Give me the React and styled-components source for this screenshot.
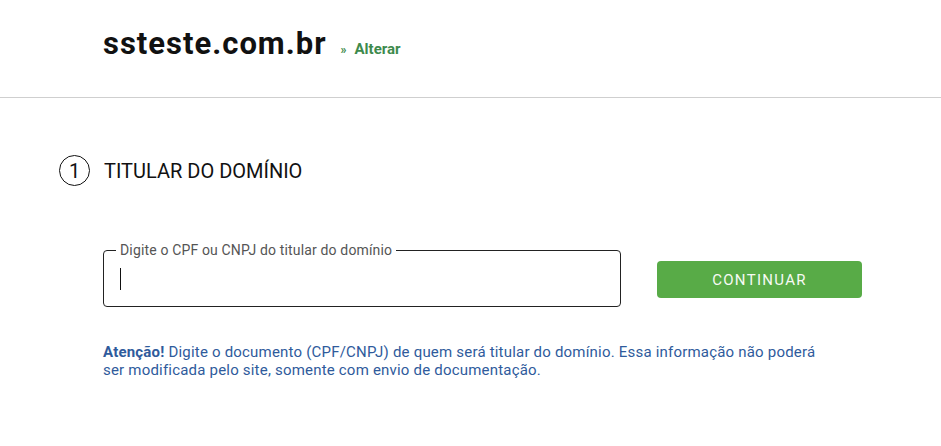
import React from 'react';
import styled, { createGlobalStyle } from 'styled-components';

const GlobalStyle = createGlobalStyle`
  html, body {
    margin: 0;
    padding: 0;
    background: #fff;
    font-family: Roboto, "Liberation Sans", Arial, sans-serif;
  }
`

const HeaderSC = styled.header`
  height: 98px;
  border-bottom: 1px solid #cfcfcf;
  box-sizing: border-box;
  display: flex;
  align-items: flex-start;
  padding: 25px 0 0 103px;
`

const DomainSC = styled.h1`
  margin: 0;
  font-size: 31px;
  font-weight: 700;
  letter-spacing: 1px;
  color: #111;
  line-height: 38px;
`

const ChangeLinkSC = styled.a`
  margin: 15px 0 0 14px;
  font-size: 15px;
  font-weight: 700;
  color: #3e8a4c;
  text-decoration: none;
  line-height: 18px;
  span {
    font-size: 12px;
    margin-right: 8px;
  }
`

const MainSC = styled.main`
  padding: 57px 0 0 59px;
`

const StepSC = styled.div`
  display: flex;
  align-items: center;
  gap: 14px;
`

const StepNumberSC = styled.span`
  width: 29px;
  height: 29px;
  border: 1.5px solid #111;
  border-radius: 50%;
  display: flex;
  align-items: center;
  justify-content: center;
  font-size: 20px;
  color: #111;
`

const StepTitleSC = styled.h2`
  margin: 0;
  font-size: 20px;
  font-weight: 400;
  color: #111;
`

const FormRowSC = styled.div`
  display: flex;
  align-items: flex-end;
  gap: 36px;
  margin: 56px 0 0 44px;
`

const FieldsetSC = styled.fieldset`
  width: 518px;
  height: 65px;
  box-sizing: border-box;
  margin: 0;
  padding: 0 16px;
  border: 1px solid #222;
  border-radius: 4px;
  display: flex;
  align-items: center;
`

const LegendSC = styled.legend`
  padding: 0 4px;
  margin-left: -4px;
  font-size: 14px;
  letter-spacing: 0.15px;
  color: #555;
`

const CaretSC = styled.span`
  width: 1px;
  height: 22px;
  background: #111;
  margin-top: -6px;
`

const ButtonSC = styled.button`
  width: 205px;
  height: 37px;
  margin-bottom: 9px;
  border: none;
  border-radius: 4px;
  background: #58ab47;
  color: #f7faf5;
  font-family: inherit;
  font-size: 15px;
  letter-spacing: 1.3px;
  cursor: pointer;
`

const NoticeSC = styled.p`
  margin: 36px 0 0 44px;
  width: 722px;
  font-size: 15px;
  letter-spacing: 0.2px;
  line-height: 18px;
  color: #2f5b9c;
  b {
    font-weight: 700;
  }
`

export default function App() {
  return (
    <>
      <GlobalStyle />
      <HeaderSC>
        <DomainSC>ssteste.com.br</DomainSC>
        <ChangeLinkSC href="#"><span>»</span>Alterar</ChangeLinkSC>
      </HeaderSC>
      <MainSC>
        <StepSC>
          <StepNumberSC>1</StepNumberSC>
          <StepTitleSC>TITULAR DO DOMÍNIO</StepTitleSC>
        </StepSC>
        <FormRowSC>
          <FieldsetSC>
            <LegendSC>Digite o CPF ou CNPJ do titular do domínio</LegendSC>
            <CaretSC />
          </FieldsetSC>
          <ButtonSC>CONTINUAR</ButtonSC>
        </FormRowSC>
        <NoticeSC>
          <b>Atenção!</b> Digite o documento (CPF/CNPJ) de quem será titular do domínio. Essa informação não poderá ser modificada pelo site, somente com envio de documentação.
        </NoticeSC>
      </MainSC>
    </>
  )
}
